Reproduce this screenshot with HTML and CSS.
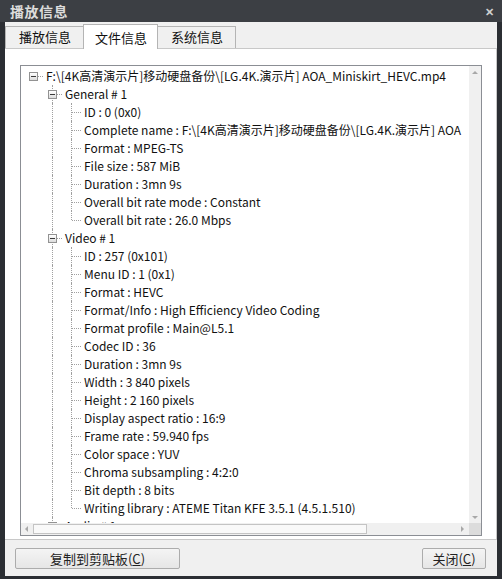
FILE: index.html
```html
<!DOCTYPE html>
<html lang="zh-CN">

<head>
    <meta charset="UTF-8">
    <title>播放信息</title>
    <link rel="stylesheet" href="styles.css">
</head>

<body>
    <div class="window">
        <div class="titlebar">
            <span class="title">播放信息</span>
            <span class="close">✕</span>
        </div>

        <div class="frame">
            <div class="tabs">
                <div class="tab">播放信息</div>
                <div class="tab active">文件信息</div>
                <div class="tab">系统信息</div>
            </div>

            <div class="panel">
                <div class="treebox">
                    <div class="tree">
                        <div class="row">
                            <span class="cell node"><i class="box"></i></span>
                            <span class="label">F:\[4K高清演示片]移动硬盘备份\[LG.4K.演示片] AOA_Miniskirt_HEVC.mp4</span>
                        </div>

                        <div class="row">
                            <span class="cell"></span>
                            <span class="cell node branch"><i class="box"></i></span>
                            <span class="label">General # 1</span>
                        </div>
                        <div class="row"><span class="cell"></span><span class="cell line"></span><span class="cell branch"></span><span class="label">ID : 0 (0x0)</span></div>
                        <div class="row"><span class="cell"></span><span class="cell line"></span><span class="cell branch"></span><span class="label">Complete name : F:\[4K高清演示片]移动硬盘备份\[LG.4K.演示片] AOA</span></div>
                        <div class="row"><span class="cell"></span><span class="cell line"></span><span class="cell branch"></span><span class="label">Format : MPEG-TS</span></div>
                        <div class="row"><span class="cell"></span><span class="cell line"></span><span class="cell branch"></span><span class="label">File size : 587 MiB</span></div>
                        <div class="row"><span class="cell"></span><span class="cell line"></span><span class="cell branch"></span><span class="label">Duration : 3mn 9s</span></div>
                        <div class="row"><span class="cell"></span><span class="cell line"></span><span class="cell branch"></span><span class="label">Overall bit rate mode : Constant</span></div>
                        <div class="row"><span class="cell"></span><span class="cell line"></span><span class="cell branch last"></span><span class="label">Overall bit rate : 26.0 Mbps</span></div>

                        <div class="row">
                            <span class="cell"></span>
                            <span class="cell node branch"><i class="box"></i></span>
                            <span class="label">Video # 1</span>
                        </div>
                        <div class="row"><span class="cell"></span><span class="cell line"></span><span class="cell branch"></span><span class="label">ID : 257 (0x101)</span></div>
                        <div class="row"><span class="cell"></span><span class="cell line"></span><span class="cell branch"></span><span class="label">Menu ID : 1 (0x1)</span></div>
                        <div class="row"><span class="cell"></span><span class="cell line"></span><span class="cell branch"></span><span class="label">Format : HEVC</span></div>
                        <div class="row"><span class="cell"></span><span class="cell line"></span><span class="cell branch"></span><span class="label">Format/Info : High Efficiency Video Coding</span></div>
                        <div class="row"><span class="cell"></span><span class="cell line"></span><span class="cell branch"></span><span class="label">Format profile : Main@L5.1</span></div>
                        <div class="row"><span class="cell"></span><span class="cell line"></span><span class="cell branch"></span><span class="label">Codec ID : 36</span></div>
                        <div class="row"><span class="cell"></span><span class="cell line"></span><span class="cell branch"></span><span class="label">Duration : 3mn 9s</span></div>
                        <div class="row"><span class="cell"></span><span class="cell line"></span><span class="cell branch"></span><span class="label">Width : 3 840 pixels</span></div>
                        <div class="row"><span class="cell"></span><span class="cell line"></span><span class="cell branch"></span><span class="label">Height : 2 160 pixels</span></div>
                        <div class="row"><span class="cell"></span><span class="cell line"></span><span class="cell branch"></span><span class="label">Display aspect ratio : 16:9</span></div>
                        <div class="row"><span class="cell"></span><span class="cell line"></span><span class="cell branch"></span><span class="label">Frame rate : 59.940 fps</span></div>
                        <div class="row"><span class="cell"></span><span class="cell line"></span><span class="cell branch"></span><span class="label">Color space : YUV</span></div>
                        <div class="row"><span class="cell"></span><span class="cell line"></span><span class="cell branch"></span><span class="label">Chroma subsampling : 4:2:0</span></div>
                        <div class="row"><span class="cell"></span><span class="cell line"></span><span class="cell branch"></span><span class="label">Bit depth : 8 bits</span></div>
                        <div class="row"><span class="cell"></span><span class="cell line"></span><span class="cell branch last"></span><span class="label">Writing library : ATEME Titan KFE 3.5.1 (4.5.1.510)</span></div>

                        <div class="row">
                            <span class="cell"></span>
                            <span class="cell node branch"><i class="box"></i></span>
                            <span class="label">Audio # 1</span>
                        </div>
                    </div>

                    <div class="vscroll">
                        <span class="arrow up"></span>
                        <span class="track"></span>
                        <span class="arrow down"></span>
                    </div>
                    <div class="hscroll">
                        <span class="arrow left"></span>
                        <span class="thumb"></span>
                        <span class="track"></span>
                        <span class="arrow right"></span>
                    </div>
                    <div class="corner"></div>
                </div>
            </div>

            <div class="footer">
                <button class="btn copy">复制到剪贴板(<u>C</u>)</button>
                <button class="btn shut">关闭(<u>C</u>)</button>
            </div>
        </div>
    </div>
</body>

</html>
```

FILE: styles.css
```css
body {
    margin: 0;
    padding: 0;
    font-family: "Noto Sans CJK SC", sans-serif;
    color: #000;
}

.window {
    width: 502px;
    height: 579px;
    background-color: #2b2e33;
    display: flex;
    flex-direction: column;
}

.titlebar {
    height: 22px;
    display: flex;
    align-items: center;
    justify-content: space-between;
    padding: 0 8px 0 10px;
    background-color: #3c3f44;
    color: #dcdcdc;
}

.title {
    font-size: 14px;
    font-weight: bold;
    letter-spacing: 0.5px;
}

.close {
    font-size: 11px;
    font-weight: bold;
    color: #d0d0d0;
}

.frame {
    flex: 1;
    margin: 0 5px 3px 5px;
    background-color: #f0f0f0;
    display: flex;
    flex-direction: column;
}

/* tabs */
.tabs {
    height: 26px;
    display: flex;
    align-items: flex-end;
}

.tab {
    height: 22px;
    box-sizing: border-box;
    padding: 0 12px 0 13px;
    border: 1px solid #b4b4b4;
    border-bottom: none;
    margin-right: -1px;
    background-color: #f0f0f0;
    font-size: 13px;
    line-height: 20px;
    color: #111;
}

.tab.active {
    height: 25px;
    background-color: #fff;
    position: relative;
    z-index: 1;
    margin-bottom: -1px;
    padding: 0 10px 0 11px;
    line-height: 25px;
}

/* main panel */
.panel {
    height: 492px;
    box-sizing: border-box;
    background-color: #fff;
    border: 1px solid #c8c8c8;
    border-left: none;
    padding: 16px 15px 0 15px;
}

.treebox {
    width: 462px;
    height: 471px;
    box-sizing: border-box;
    border: 1px solid #8b8e94;
    display: grid;
    grid-template-columns: 1fr 12px;
    grid-template-rows: 1fr 12px;
}

.tree {
    overflow: hidden;
    padding: 1px 0 0 3px;
    white-space: nowrap;
    font-size: 12px;
    color: #111;
}

.row {
    height: 18px;
    display: flex;
    align-items: center;
}

.cell {
    width: 19px;
    height: 18px;
    flex: none;
    position: relative;
}

.label {
    margin-left: 3px;
    line-height: 18px;
}

/* dotted tree lines */
.cell.line::before,
.cell.branch::before {
    content: "";
    position: absolute;
    left: 9px;
    top: 0;
    bottom: 0;
    border-left: 1px dotted #a0a0a0;
}

.cell.branch.last::before {
    bottom: 9px;
}

.cell.branch::after,
.cell.node::after {
    content: "";
    position: absolute;
    left: 10px;
    right: 0;
    top: 9px;
    border-top: 1px dotted #a0a0a0;
}

.cell.node::after {
    left: 14px;
}

/* expander square with minus */
.box {
    position: absolute;
    left: 5px;
    top: 5px;
    width: 9px;
    height: 9px;
    box-sizing: border-box;
    border: 1px solid #929292;
    background: linear-gradient(#ffffff, #dcdcdc);
    z-index: 1;
}

.box::after {
    content: "";
    position: absolute;
    left: 1px;
    top: 3px;
    width: 5px;
    height: 1px;
    background-color: #3a3a3a;
}

/* scrollbars */
.vscroll {
    background-color: #f0f0f0;
    display: flex;
    flex-direction: column;
    align-items: center;
}

.vscroll .track {
    flex: 1;
}

.hscroll {
    background-color: #f0f0f0;
    display: flex;
    align-items: center;
}

.hscroll .thumb {
    width: 334px;
    height: 10px;
    box-sizing: border-box;
    border: 1px solid #c4c4c4;
    background-color: #f9f9f9;
}

.hscroll .track {
    flex: 1;
}

.corner {
    background-color: #dcdcdc;
}

.arrow {
    width: 12px;
    height: 12px;
    flex: none;
    position: relative;
}

.arrow::after {
    content: "";
    position: absolute;
    left: 3px;
    top: 4px;
    border: 3px solid transparent;
}

.arrow.up::after {
    top: 2px;
    border-bottom: 3px solid #a8a8a8;
}

.arrow.down::after {
    top: 5px;
    border-top: 3px solid #a8a8a8;
}

.arrow.left::after {
    left: 1px;
    top: 3px;
    border-right: 3px solid #a8a8a8;
}

.arrow.right::after {
    left: 4px;
    top: 3px;
    border-left: 3px solid #a8a8a8;
}

/* bottom buttons */
.footer {
    flex: 1;
    display: flex;
    justify-content: space-between;
    align-items: flex-start;
    padding: 8px 11px 0 10px;
}

.btn {
    height: 21px;
    padding: 0;
    border: 1px solid #acacac;
    border-radius: 2px;
    background: linear-gradient(#f4f4f4, #e6e6e6);
    font-family: "Noto Sans CJK SC", sans-serif;
    font-size: 13px;
    line-height: 19px;
    color: #222;
}

.btn.copy {
    width: 165px;
}

.btn.shut {
    width: 64px;
}
```
